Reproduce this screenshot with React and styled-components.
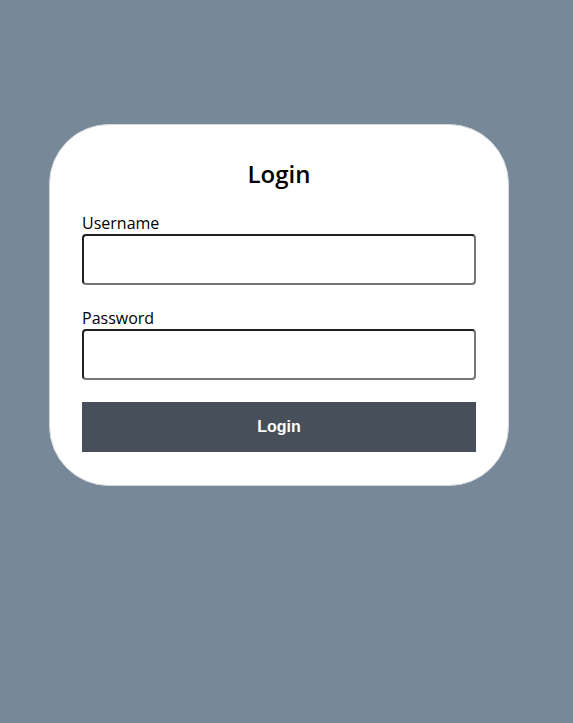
import styled, { createGlobalStyle } from "styled-components";

const GlobalStyle = createGlobalStyle`
  html, body {
    margin: 0;
    background: #778899;
    min-height: 100%;
  }
  body {
    font-family: "Open Sans", sans-serif;
  }
`;

const Page = styled.div`
  min-height: 723px;
  padding: 124px 0 0 49px;
  box-sizing: border-box;
`;

const Card = styled.form`
  width: 460px;
  box-sizing: border-box;
  padding: 31px 32px 33px;
  background: #fff;
  border: 1px solid #d6d9dd;
  border-radius: 60px;
  display: flex;
  flex-direction: column;
`;

const Title = styled.h2`
  margin: 1px 0 22px;
  text-align: center;
  font-size: 24px;
  line-height: 33px;
  font-weight: 600;
  color: #000;
`;

const Field = styled.div`
  display: flex;
  flex-direction: column;
  margin-bottom: 22px;
`;

const Label = styled.label`
  font-size: 16px;
  line-height: 22px;
  color: #000;
`;

const Input = styled.input`
  height: 51px;
  box-sizing: border-box;
  border: 2px inset #767676;
  border-radius: 4px;
  font-size: 16px;
  padding: 0 8px;
  background: #fff;
`;

const Button = styled.button`
  height: 50px;
  border: none;
  background: #474f5a;
  color: #fff;
  font-family: "Liberation Sans", Arial, sans-serif;
  font-weight: 700;
  font-size: 16px;
  cursor: pointer;
`;

export default function App() {
  return (
    <>
      <GlobalStyle />
      <Page>
        <Card onSubmit={(e) => e.preventDefault()}>
          <Title>Login</Title>
          <Field>
            <Label htmlFor="username">Username</Label>
            <Input id="username" type="text" />
          </Field>
          <Field>
            <Label htmlFor="password">Password</Label>
            <Input id="password" type="password" />
          </Field>
          <Button type="submit">Login</Button>
        </Card>
      </Page>
    </>
  );
}
